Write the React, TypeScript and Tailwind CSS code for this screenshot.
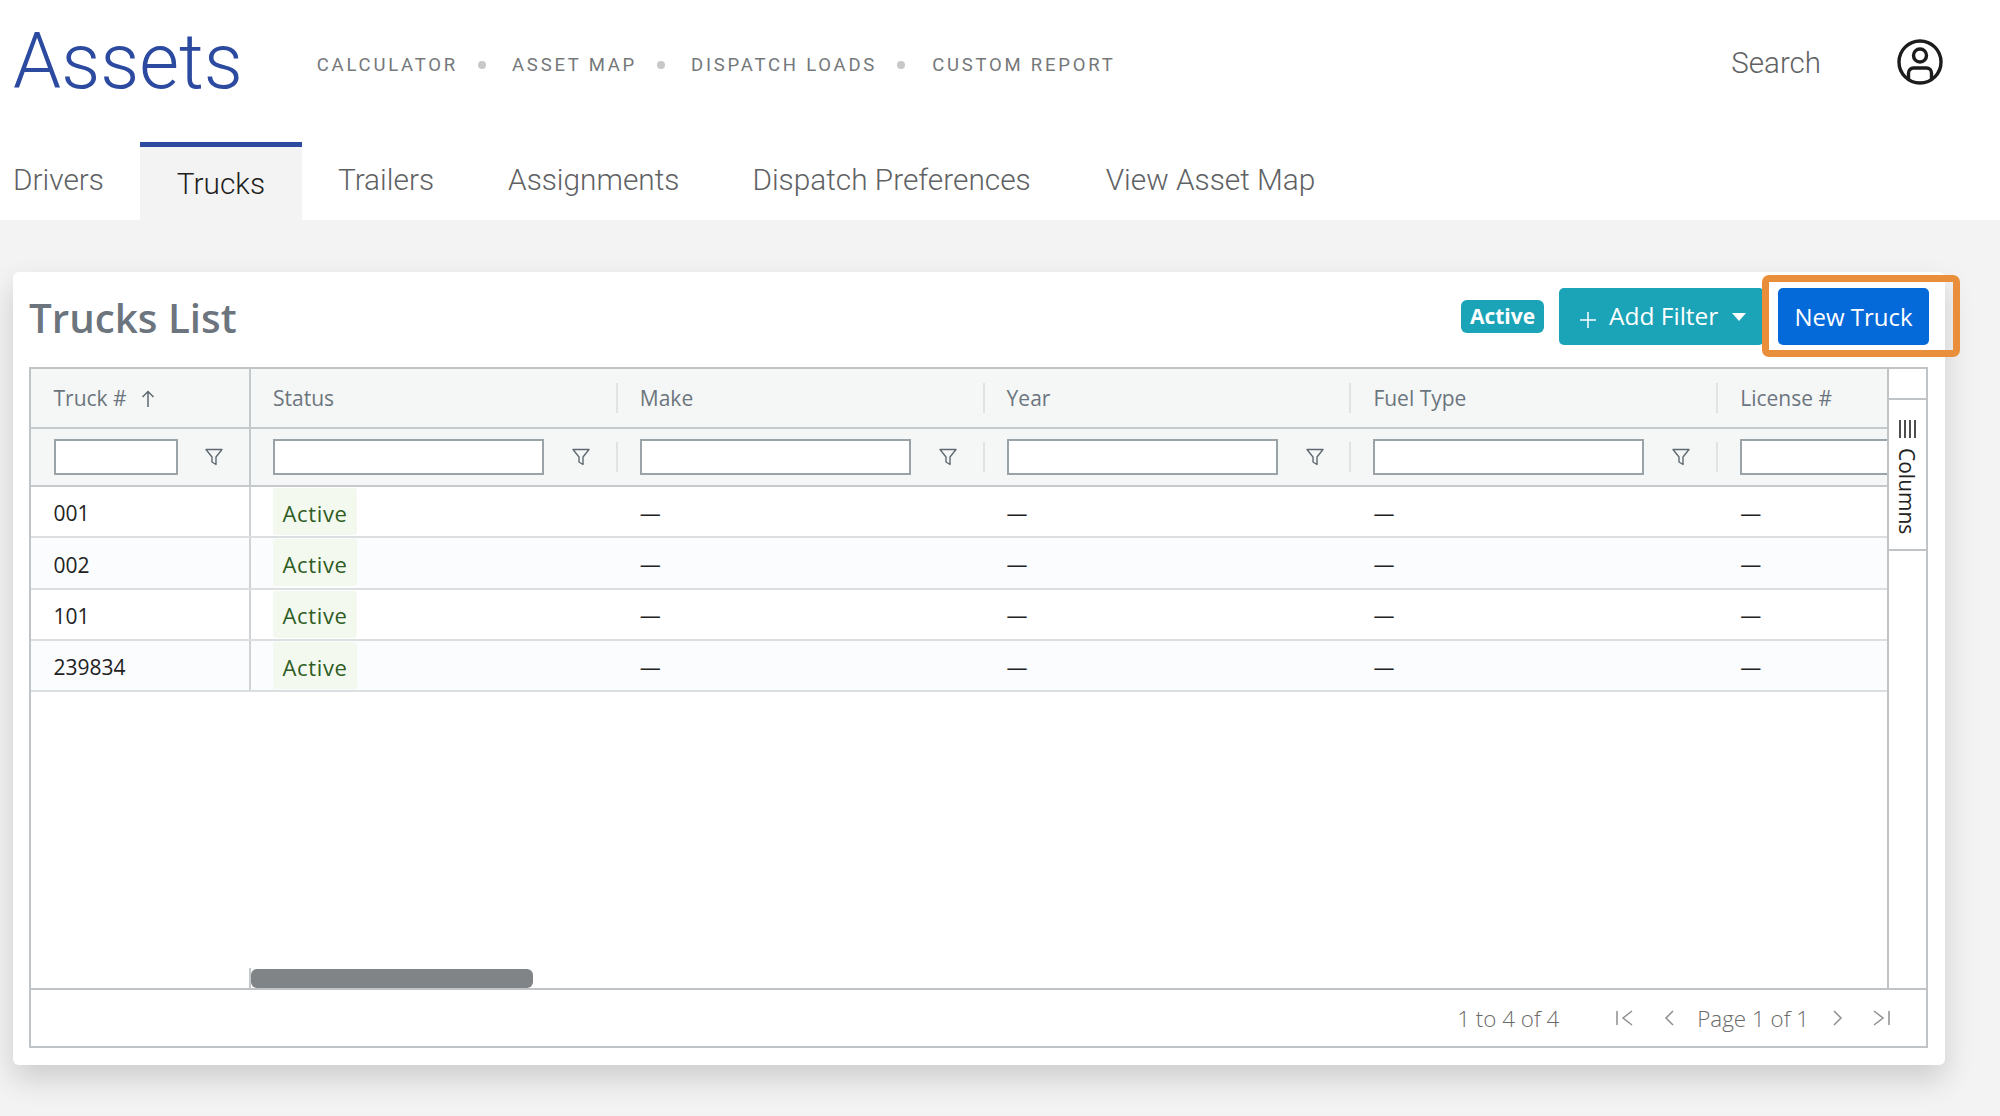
import React from "react";

const Funnel = () => (
  <svg width="18" height="18" viewBox="0 0 18 18" fill="none" stroke="#5f6a70" strokeWidth="1.4" strokeLinejoin="round" className="shrink-0">
    <path d="M1 1.5H17L11 9V16.5L7 14V9Z" />
  </svg>
);

const columns = ["Make", "Year", "Fuel Type", "License #"];
const rows = ["001", "002", "101", "239834"];

function Pager({ d, w, className }: { d: string; w: number; className: string }) {
  return (
    <svg width={w} height="16" viewBox={`0 0 ${w} 16`} fill="none" stroke="#8f8f8f" strokeWidth="1.5" className={`shrink-0 ${className}`}>
      <path d={d} />
    </svg>
  );
}

export default function App() {
  return (
    <div className="h-[1116px] overflow-hidden bg-[#f3f3f3] font-['Roboto',sans-serif]">
      <header className="h-[220px] bg-white">
        <div className="flex h-[142px] items-start">
          <h1 className="ml-[13px] mt-[17px] text-[77px] leading-[90px] font-light text-[#2b4aa0]">Assets</h1>
          <nav className="ml-[74px] mt-[55px] flex items-center text-[18.5px] leading-[20px] tracking-[0.15em] text-[#75787a]">
            <span>CALCULATOR</span>
            <span className="ml-[20px] mr-[26px] size-[8px] rounded-full bg-[#c8c8c8]" />
            <span>ASSET MAP</span>
            <span className="ml-[20px] mr-[26px] size-[8px] rounded-full bg-[#c8c8c8]" />
            <span>DISPATCH LOADS</span>
            <span className="ml-[20px] mr-[27px] size-[8px] rounded-full bg-[#c8c8c8]" />
            <span>CUSTOM REPORT</span>
          </nav>
          <div className="ml-auto mr-[57px] mt-[39px] flex items-start">
            <span className="mt-[2px] text-[29.5px] leading-[44px] text-[#5f6264] font-light">Search</span>
            <svg width="46" height="46" viewBox="0 0 46 46" fill="none" stroke="#1c1c1c" strokeWidth="3.4" className="ml-[76px]">
              <circle cx="23" cy="23" r="21" />
              <circle cx="23" cy="16.5" r="6.5" />
              <path d="M11.5 40V34a5 5 0 0 1 5-5h13a5 5 0 0 1 5 5v6" />
            </svg>
          </div>
        </div>
        <div className="flex h-[78px] items-start text-[29.8px] font-light text-[#5f6264]">
          <span className="ml-[13px] mt-[19px] leading-[38px]">Drivers</span>
          <span className="ml-[36px] flex h-[78px] w-[162px] justify-center border-t-[5px] border-[#2b4aa0] bg-[#f3f3f3] pt-[18px] leading-[38px] text-[#1f1f1f]">Trucks</span>
          <span className="ml-[36px] mt-[19px] leading-[38px]">Trailers</span>
          <span className="ml-[74px] mt-[19px] leading-[38px]">Assignments</span>
          <span className="ml-[73px] mt-[19px] leading-[38px]">Dispatch Preferences</span>
          <span className="ml-[75px] mt-[19px] leading-[38px]">View Asset Map</span>
        </div>
      </header>

      <main className="ml-[13px] mt-[52px] flex h-[793px] w-[1932px] flex-col rounded-[6px] bg-white px-[16px] pt-[16px] font-['Open_Sans',sans-serif] shadow-[0_14px_30px_rgba(0,0,0,0.16)]">
        <div className="flex h-[79px] items-start justify-between">
          <h2 className="mt-[4px] text-[40.3px] leading-[52px] font-semibold text-[#6c757d]">Trucks List</h2>
          <div className="flex items-center">
            <span className="flex h-[33px] w-[83px] items-center justify-center rounded-[6px] bg-[#1ba3b8] text-[21px] font-bold text-white">Active</span>
            <button className="ml-[15px] flex h-[57px] w-[205px] items-center rounded-[5px] bg-[#1ba3b8] pl-[21px] text-[24.5px] text-white">
              <svg width="16" height="16" viewBox="0 0 16 16" stroke="white" strokeWidth="1.5" className="mt-[6px]"><path d="M8 0V16M0 8H16" /></svg>
              <span className="ml-[13px]">Add Filter</span>
              <span className="ml-[14px] border-x-[7px] border-t-[8px] border-x-transparent border-t-white" />
            </button>
            <div className="relative ml-[14px]">
              <button className="flex h-[57px] w-[151px] items-center justify-center rounded-[5px] bg-[#0469d9] text-[24px] text-white">New Truck</button>
              <span className="absolute left-[-16px] top-[-13px] h-[82px] w-[198px] rounded-[7px] border-[7px] border-[#e98f3c]" />
            </div>
          </div>
        </div>

        <div className="flex h-[681px] w-[1899px] flex-col border-2 border-[#c0c4c6]">
          <div className="flex min-h-0 flex-1">
            <div className="flex min-w-0 flex-1 flex-col">
              <div className="flex h-[60px] shrink-0 items-center border-b-2 border-[#c4c9cb] bg-[#f5f7f7] text-[21px] text-[#6c757d]">
                <div className="flex h-full w-[220px] shrink-0 items-center border-r-2 border-[#c4c9cb] pl-[22.5px] pt-[1px]">
                  <span>Truck #</span>
                  <svg width="14" height="18" viewBox="0 0 14 18" fill="none" stroke="#5f6a70" strokeWidth="1.5" className="ml-[14px]"><path d="M7 17V1.5M1.5 7L7 1.5L12.5 7" /></svg>
                </div>
                <div className="flex h-[30px] w-[366.8px] shrink-0 items-center border-r-2 border-[#dfe3e4] pl-[22px] pt-[2px]">Status</div>
                {columns.map((c) => (
                  <div key={c} className="flex h-[30px] w-[366.8px] shrink-0 items-center border-r-2 border-[#dfe3e4] pl-[22px] pt-[2px] last:border-r-0">{c}</div>
                ))}
              </div>
              <div className="flex h-[58px] shrink-0 items-center overflow-hidden border-b-2 border-[#c4c9cb] bg-[#f5f7f7]">
                <div className="flex h-full w-[220px] shrink-0 items-center border-r-2 border-[#c4c9cb] pl-[22.5px]">
                  <div className="h-[36px] w-[124px] border-2 border-[#9aa3a7] bg-white" />
                  <span className="ml-[27px]"><Funnel /></span>
                </div>
                {["Status", ...columns].map((c) => (
                  <div key={c} className="flex h-[30px] w-[366.8px] shrink-0 items-center border-r-2 border-[#dfe3e4] pl-[22px] last:border-r-0">
                    <div className="h-[36px] w-[271px] shrink-0 border-2 border-[#9aa3a7] bg-white" />
                    <span className="ml-[28px]"><Funnel /></span>
                  </div>
                ))}
              </div>
              {rows.map((r, i) => (
                <div key={r} className={`flex h-[51.3px] shrink-0 items-center border-b-2 border-[#dcdfe0] text-[21px] text-[#222] ${i % 2 ? "bg-[#fbfcfd]" : "bg-white"}`}>
                  <div className="flex h-full w-[220px] shrink-0 items-center border-r-2 border-[#d0d3d5] pl-[22.5px] pt-[5px]">{r}</div>
                  <div className="w-[366.8px] shrink-0 pl-[22px]">
                    <span className="flex h-[47px] w-[84px] items-center justify-center rounded-[3px] bg-[#f4f9f0] pt-[3px] text-[22px] font-medium tracking-[0.03em] text-[#2f5d24]">Active</span>
                  </div>
                  {columns.map((c) => (
                    <div key={c} className="w-[366.8px] shrink-0 pl-[22px] pt-[4px]">—</div>
                  ))}
                </div>
              ))}
              <div className="flex-1" />
              <div className="flex h-[20px] shrink-0">
                <div className="h-full w-[220px] shrink-0 border-r-2 border-[#c4c9cb]" />
                <div className="mt-[1px] h-[19px] w-[282px] rounded-[6px] bg-[#808486]" />
              </div>
            </div>
            <div className="flex w-[39px] shrink-0 flex-col border-l-2 border-[#c0c4c6]">
              <div className="h-[31px] border-b-2 border-[#c0c4c6]" />
              <div className="flex h-[151px] flex-col items-center border-b-2 border-[#c0c4c6] pt-[20px]">
                <svg width="20" height="18" viewBox="0 0 20 18" stroke="#222" strokeWidth="1.6"><path d="M2 0V18M7 0V18M12 0V18M17 0V18" /></svg>
                <span className="mr-[2px] mt-[10px] text-[21px] leading-[24px] text-[#222] [writing-mode:vertical-rl]">Columns</span>
              </div>
              <div className="flex-1" />
            </div>
          </div>
          <footer className="flex h-[58px] shrink-0 items-center justify-end border-t-2 border-[#c0c4c6] pr-[36px] text-[22.4px] font-light text-[#6a6a6a]">
            <span className="pt-[2px]">1 to 4 of 4</span>
            <Pager w={18} d="M1 1V15M16 1L7 8L16 15" className="ml-[57px]" />
            <Pager w={10} d="M9 1L2 8L9 15" className="ml-[30px]" />
            <span className="ml-[23px] pt-[2px]">Page 1 of 1</span>
            <Pager w={10} d="M1 1L8 8L1 15" className="ml-[24px]" />
            <Pager w={18} d="M2 1L11 8L2 15M17 1V15" className="ml-[29px]" />
          </footer>
        </div>
      </main>
    </div>
  );
}
